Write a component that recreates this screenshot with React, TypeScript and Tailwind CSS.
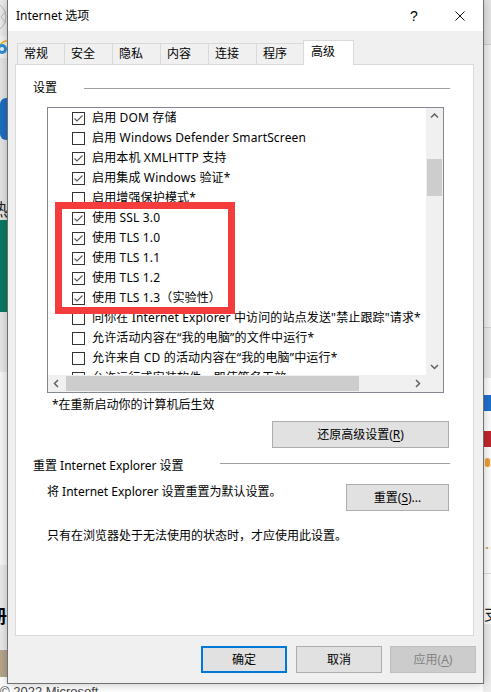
import type { ReactNode } from 'react'

const items: [string, boolean][] = [
  ['启用 DOM 存储', true],
  ['启用 Windows Defender SmartScreen', false],
  ['启用本机 XMLHTTP 支持', true],
  ['启用集成 Windows 验证*', true],
  ['启用增强保护模式*', false],
  ['使用 SSL 3.0', true],
  ['使用 TLS 1.0', true],
  ['使用 TLS 1.1', true],
  ['使用 TLS 1.2', true],
  ['使用 TLS 1.3（实验性）', true],
  ['向你在 Internet Explorer 中访问的站点发送"禁止跟踪"请求*', false],
  ['允许活动内容在“我的电脑”的文件中运行*', false],
  ['允许来自 CD 的活动内容在“我的电脑”中运行*', false],
  ['允许运行或安装软件，即使签名无效', false],
]

const tabs: [string, string][] = [
  ['常规', 'w-[47px]'],
  ['安全', 'w-[48px]'],
  ['隐私', 'w-[48px]'],
  ['内容', 'w-[48px]'],
  ['连接', 'w-[48px]'],
  ['程序', 'w-[47px]'],
]

function Check({ on }: { on: boolean }) {
  return (
    <span className="flex h-[13px] w-[13px] shrink-0 items-center justify-center border border-[#333333] bg-white">
      {on && (
        <svg width="11" height="11" viewBox="0 0 11 11">
          <path d="M1.5 5.5 L4 8 L9.5 2.5" fill="none" stroke="#555555" strokeWidth="1.1" />
        </svg>
      )}
    </span>
  )
}

const arrows = {
  up: 'M1 5.5 L4.5 2 L8 5.5',
  down: 'M1 3 L4.5 6.5 L8 3',
  left: 'M6 1 L2.5 4.5 L6 8',
  right: 'M3 1 L6.5 4.5 L3 8',
}

function Arrow({ dir }: { dir: keyof typeof arrows }) {
  return (
    <span className="flex h-[17px] w-[17px] shrink-0 items-center justify-center">
      <svg width="9" height="9" viewBox="0 0 9 9">
        <path d={arrows[dir]} fill="none" stroke="#606060" strokeWidth="1.5" />
      </svg>
    </span>
  )
}

const btnLook = {
  normal: 'border border-[#adadad] bg-[#e1e1e1] text-black',
  focus: 'border-2 border-[#0078d7] bg-[#e1e1e1] text-black',
  disabled: 'border border-[#bfbfbf] bg-[#cccccc] text-[#838383]',
}

function Btn({
  children,
  className = '',
  look = 'normal',
}: {
  children: ReactNode
  className?: string
  look?: keyof typeof btnLook
}) {
  return (
    <button
      type="button"
      className={`flex h-[27px] shrink-0 items-center justify-center text-[12px] leading-[16px] ${btnLook[look]} ${className}`}
    >
      {children}
    </button>
  )
}

function LeftStrip() {
  return (
    <div className="absolute left-0 top-0 flex h-full w-[7px] flex-col overflow-hidden">
      <div className="h-[36px] shrink-0 bg-[#ececec]">
        <svg width="7" height="36" viewBox="0 0 7 36">
          <circle cx="-9" cy="17" r="15" fill="none" stroke="#b9b9b9" />
          <path d="M6 11 L1 17 L6 23" fill="none" stroke="#b9b9b9" />
        </svg>
      </div>
      <div className="h-[22px] shrink-0 bg-[#f3f3f3]">
        <svg width="7" height="22" viewBox="0 0 7 22">
          <path d="M0 9 Q5 3 8 6" fill="none" stroke="#f0b41c" strokeWidth="1.5" />
          <circle cx="2" cy="13" r="5" fill="#2b8fdc" />
          <circle cx="2" cy="13" r="2" fill="#f3f3f3" />
        </svg>
      </div>
      <div className="flex h-[162px] shrink-0 flex-col bg-[#e6e6e6]">
        <div className="mt-[40px] h-[42px] w-[7px] rounded-l-[6px] bg-[#1d6fc4]" />
        <div className="mt-[60px] h-[20px] overflow-hidden">
          <span className="-ml-[9px] block text-[17px] leading-[20px] text-[#222]">热</span>
        </div>
      </div>
      <div className="h-[92px] shrink-0 bg-[#0a7a66]" />
      <div className="h-[60px] shrink-0 bg-[#e8e8e8]" />
      <div className="h-[193px] shrink-0 bg-[#f8f8f8]" />
      <div className="flex h-[85px] shrink-0 flex-col bg-[#ececec]">
        <div className="mt-[40px] h-[22px] overflow-hidden">
          <span className="-ml-[11px] block text-[18px] font-bold leading-[22px] text-black">册</span>
        </div>
      </div>
      <div className="h-[27px] shrink-0 bg-[#b6a68c]" />
      <div className="flex-1 bg-white" />
    </div>
  )
}

function RightStrip() {
  return (
    <div className="absolute right-0 top-0 flex h-full w-[8px] flex-col overflow-hidden bg-[#f4f4f4]">
      <div className="h-[44px] shrink-0 bg-[#e6e6e6]" />
      <div className="h-px shrink-0 bg-[#cfcfcf]" />
      <div className="h-[282px] shrink-0 bg-[#f2f2f2]" />
      <div className="h-px shrink-0 bg-[#d4d4d4]" />
      <div className="h-[50px] shrink-0 bg-[#ededed]" />
      <div className="h-[17px] shrink-0 bg-white" />
      <div className="ml-[1px] h-[16px] shrink-0 bg-[#1f6fd0]" />
      <div className="h-[20px] shrink-0 bg-white" />
      <div className="ml-[1px] h-[16px] shrink-0 bg-[#c1272d]" />
      <div className="h-[11px] shrink-0 bg-white" />
      <div className="ml-[2px] h-[9px] w-[5px] shrink-0 rounded-full bg-[#f0a030]" />
      <div className="h-[80px] shrink-0 bg-white" />
      <div className="ml-[3px] h-[2px] w-[2px] shrink-0 bg-[#d6b34a]" />
      <div className="h-[24px] shrink-0 bg-white" />
      <div className="h-px shrink-0 bg-[#dddddd]" />
      <div className="h-[30px] shrink-0 bg-white" />
      <div className="h-[20px] shrink-0 overflow-hidden bg-white">
        <span className="ml-[1px] block text-[16px] leading-[20px] text-[#222]">支</span>
      </div>
      <div className="flex-1 bg-[#eeeeee]" />
    </div>
  )
}

export default function App() {
  return (
    <div className="relative h-[692px] w-[491px] overflow-hidden bg-white font-['Noto_Sans','Noto_Sans_CJK_SC',sans-serif] text-[12px] leading-[16px] text-black">
      <LeftStrip />
      <RightStrip />
      <div className="absolute left-0 top-[684px] whitespace-nowrap font-['Liberation_Sans',sans-serif] text-[13px] leading-[16px] text-[#444]">
        © 2022 Microsoft
      </div>

      <div className="absolute left-[7px] top-[-1px] flex h-[685px] w-[477px] flex-col border border-[#707070] bg-[#f0f0f0] shadow-[0_0_10px_rgba(0,0,0,0.25)]">
        <div className="flex h-[31px] shrink-0 items-center bg-white">
          <span className="pl-[8px]">Internet 选项</span>
          <span className="ml-auto flex h-full w-[46px] items-center justify-center font-['Liberation_Sans',sans-serif] text-[14px]">?</span>
          <span className="flex h-full w-[46px] items-center justify-center">
            <svg width="10" height="10" viewBox="0 0 10 10">
              <path d="M0.5 0.5 L9.5 9.5 M9.5 0.5 L0.5 9.5" stroke="#111" strokeWidth="1" />
            </svg>
          </span>
        </div>

        <div className="mt-[9px] flex h-[24px] shrink-0 items-end pl-[9px]">
          {tabs.map(([label, w]) => (
            <div key={label} className={`flex h-[21px] items-center border-l border-t border-[#d9d9d9] pl-[6px] ${w}`}>
              {label}
            </div>
          ))}
          <div className="relative z-10 -mb-px flex h-[25px] w-[51px] items-start border-x border-t border-[#d9d9d9] bg-white pl-[7px] pt-[3px]">
            高级
          </div>
        </div>

        <div className="ml-[7px] flex h-[572px] w-[459px] shrink-0 flex-col border border-[#d9d9d9] bg-white">
          <div className="mt-[15px] flex h-[16px] items-center pl-[17px]">
            <span>设置</span>
            <span className="ml-auto mr-[23px] h-px w-[366px] bg-[#a0a0a0]" />
          </div>

          <div className="ml-[31px] mt-[11px] flex h-[286px] w-[397px] flex-col border border-[#828790] bg-white">
            <div className="flex min-h-0 flex-1">
              <div className="relative min-w-0 flex-1 overflow-hidden">
                {items.map(([label, on]) => (
                  <div key={label} className="flex h-[20px] items-center gap-[7px] whitespace-nowrap pl-[24px] tracking-[0.15px]">
                    <Check on={on} />
                    <span>{label}</span>
                  </div>
                ))}
                <div className="absolute left-[7px] top-[94px] h-[112px] w-[180px] border-[7px] border-[#f43c3c]" />
              </div>
              <div className="flex w-[17px] shrink-0 flex-col bg-[#f0f0f0]">
                <Arrow dir="up" />
                <div className="flex-1">
                  <div className="ml-px mt-[34px] h-[37px] w-[15px] bg-[#cdcdcd]" />
                </div>
                <Arrow dir="down" />
              </div>
            </div>
            <div className="flex h-[17px] shrink-0">
              <div className="flex flex-1 bg-[#f0f0f0]">
                <Arrow dir="left" />
                <div className="flex-1">
                  <div className="ml-px mt-px h-[15px] w-[293px] bg-[#cdcdcd]" />
                </div>
                <Arrow dir="right" />
              </div>
              <div className="w-[17px] bg-[#f0f0f0]" />
            </div>
          </div>

          <div className="mt-[4px] pl-[36px]">*在重新启动你的计算机后生效</div>

          <div className="mt-[8px] flex pl-[256px]">
            <Btn className="w-[177px]">
              还原高级设置(<u className="underline-offset-2">R</u>)
            </Btn>
          </div>

          <div className="mt-[10px] flex h-[16px] pl-[17px]">
            <span>重置 Internet Explorer 设置</span>
            <span className="ml-auto mr-[23px] mt-[5px] h-px w-[230px] bg-[#a0a0a0]" />
          </div>

          <div className="mt-[10px] flex items-start pl-[31px]">
            <span>将 Internet Explorer 设置重置为默认设置。</span>
            <Btn className="ml-auto mr-[24px] w-[103px]">
              重置(<u className="underline-offset-2">S</u>)...
            </Btn>
          </div>

          <div className="mt-[17px] pl-[31px]">只有在浏览器处于无法使用的状态时，才应使用此设置。</div>
        </div>

        <div className="mt-[10px] flex shrink-0 justify-end pr-[7px]">
          <Btn look="focus" className="w-[86px]">确定</Btn>
          <Btn className="ml-[9px] w-[86px]">取消</Btn>
          <Btn look="disabled" className="ml-[8px] w-[86px]">
            应用(<u className="underline-offset-2">A</u>)
          </Btn>
        </div>
      </div>
    </div>
  )
}
